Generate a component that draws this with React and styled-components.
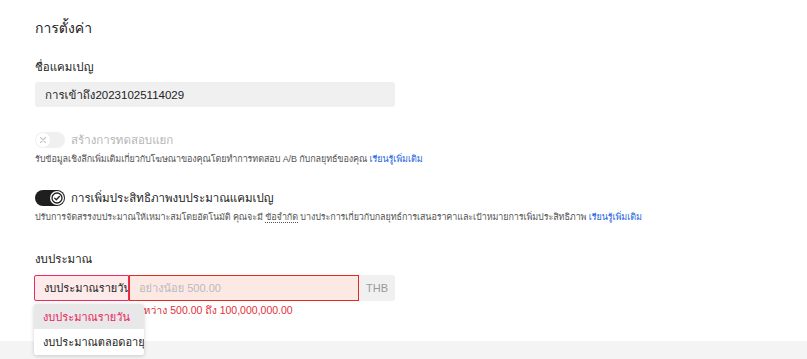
import React from "react";
import styled, { createGlobalStyle } from "styled-components";

const Global = createGlobalStyle`
  html, body { margin: 0; padding: 0; background: #fff; }
  body { font-family: "Liberation Sans", "Loma", "Noto Sans", sans-serif; color: #222; }
  * { box-sizing: border-box; }
`;

const Page = styled.div`
  width: 807px;
  height: 359px;
  overflow: hidden;
  display: flex;
  flex-direction: column;
`;

const Section = styled.div`
  padding: 17px 35px 0 35px;
  height: 341px;
  display: flex;
  flex-direction: column;
`;

const Title = styled.h2`
  margin: 0;
  font-size: 14px;
  font-weight: 400;
  line-height: 22px;
  color: #222;
`;

const Label = styled.div`
  font-size: 11.5px;
  line-height: 16px;
  color: #222;
  margin-top: ${(p) => p.$mt}px;
`;

const TextInput = styled.div`
  margin-top: 7px;
  width: 360px;
  height: 25px;
  background: #f0f0f0;
  border-radius: 3px;
  padding: 0 10px;
  display: flex;
  align-items: center;
  font-size: 11.5px;
  color: #222;
`;

const ToggleRow = styled.div`
  display: flex;
  align-items: center;
  gap: 6px;
  margin-top: ${(p) => p.$mt}px;
  height: 16px;
`;

const Track = styled.div`
  width: 30px;
  height: 16px;
  border-radius: 8px;
  background: ${(p) => (p.$on ? "#1f1f1f" : "#f0f0f0")};
  position: relative;
  flex-shrink: 0;
`;

const Knob = styled.div`
  position: absolute;
  top: 1px;
  left: ${(p) => (p.$on ? "15px" : "1px")};
  width: 14px;
  height: 14px;
  border-radius: 50%;
  background: #fff;
  display: flex;
  align-items: center;
  justify-content: center;
`;

const ToggleLabel = styled.span`
  font-size: 11.5px;
  color: ${(p) => (p.$disabled ? "#b5b5b5" : "#222")};
`;

const Desc = styled.div`
  margin-top: 4px;
  font-size: 9px;
  letter-spacing: -0.1px;
  line-height: 14px;
  color: #555;
  white-space: nowrap;
`;

const Link = styled.a`
  color: #1a5fe0;
  text-decoration: none;
  font-weight: 500;
`;

const Dotted = styled.span`
  border-bottom: 1px dotted #555;
`;

const BudgetRow = styled.div`
  margin-top: 8px;
  display: flex;
  height: 26px;
  width: 361px;
  margin-left: -1px;
`;

const SelectBox = styled.div`
  width: 95px;
  height: 26px;
  border: 1px solid #ef2a5a;
  border-radius: 2px 0 0 2px;
  background: #fdeaea;
  font-size: 11px;
  color: #222;
  display: flex;
  align-items: center;
  padding-left: 9px;
  white-space: nowrap;
  overflow: hidden;
`;

const AmountInput = styled.div`
  width: 230px;
  height: 26px;
  border: 1px solid #e52b20;
  background: #fde9e4;
  font-size: 11px;
  color: #b9b9b9;
  display: flex;
  align-items: center;
  padding-left: 9px;
`;

const Suffix = styled.div`
  width: 36px;
  height: 26px;
  background: #f0f0f0;
  border-radius: 0 3px 3px 0;
  font-size: 11px;
  color: #999;
  display: flex;
  align-items: center;
  justify-content: center;
`;

const ErrorWrap = styled.div`
  position: relative;
  width: 361px;
`;

const ErrorText = styled.div`
  margin-top: 2px;
  font-size: 10.5px;
  line-height: 14px;
  color: #e0303a;
  white-space: nowrap;
`;

const Menu = styled.div`
  position: absolute;
  top: 3px;
  left: -1px;
  width: 110px;
  background: #fff;
  border-radius: 3px;
  box-shadow: 0 1px 4px rgba(0, 0, 0, 0.18);
  overflow: hidden;
  z-index: 2;
`;

const MenuItem = styled.div`
  height: ${(p) => (p.$h ? p.$h : 25)}px;
  display: flex;
  align-items: center;
  padding-left: 9px;
  font-size: 11px;
  white-space: nowrap;
  background: ${(p) => (p.$active ? "#e8e8e8" : "#fff")};
  color: ${(p) => (p.$active ? "#e8245e" : "#222")};
`;

const Band = styled.div`
  height: 18px;
  background: #f4f4f4;
  flex-shrink: 0;
`;

const Check = () => (
  <svg width="12" height="12" viewBox="0 0 12 12" fill="none">
    <circle cx="6" cy="6" r="5" stroke="#1f1f1f" strokeWidth="1.3" />
    <path d="M3.6 6.1 L5.3 7.7 L8.4 4.5" stroke="#1f1f1f" strokeWidth="1.3" strokeLinecap="round" strokeLinejoin="round" />
  </svg>
);

const Cross = () => (
  <svg width="8" height="8" viewBox="0 0 8 8" fill="none">
    <path d="M1.5 1.5 L6.5 6.5 M6.5 1.5 L1.5 6.5" stroke="#c8c8c8" strokeWidth="1.2" strokeLinecap="round" />
  </svg>
);

export default function App() {
  return (
    <>
      <Global />
      <Page>
        <Section>
          <Title>การตั้งค่า</Title>
          <Label $mt={20}>ชื่อแคมเปญ</Label>
          <TextInput>การเข้าถึง20231025114029</TextInput>

          <ToggleRow $mt={25}>
            <Track>
              <Knob>
                <Cross />
              </Knob>
            </Track>
            <ToggleLabel $disabled>สร้างการทดสอบแยก</ToggleLabel>
          </ToggleRow>
          <Desc>
            รับข้อมูลเชิงลึกเพิ่มเติมเกี่ยวกับโฆษณาของคุณโดยทำการทดสอบ A/B กับกลยุทธ์ของคุณ{" "}
            <Link>เรียนรู้เพิ่มเติม</Link>
          </Desc>

          <ToggleRow $mt={24}>
            <Track $on>
              <Knob $on>
                <Check />
              </Knob>
            </Track>
            <ToggleLabel>การเพิ่มประสิทธิภาพงบประมาณแคมเปญ</ToggleLabel>
          </ToggleRow>
          <Desc>
            ปรับการจัดสรรงบประมาณให้เหมาะสมโดยอัตโนมัติ คุณจะมี <Dotted>ข้อจำกัด</Dotted>{" "}
            บางประการเกี่ยวกับกลยุทธ์การเสนอราคาและเป้าหมายการเพิ่มประสิทธิภาพ{" "}
            <Link>เรียนรู้เพิ่มเติม</Link>
          </Desc>

          <Label $mt={27}>งบประมาณ</Label>
          <BudgetRow>
            <SelectBox>งบประมาณรายวัน</SelectBox>
            <AmountInput>อย่างน้อย 500.00</AmountInput>
            <Suffix>THB</Suffix>
          </BudgetRow>
          <ErrorWrap>
            <ErrorText>โปรดป้อนงบประมาณระหว่าง 500.00 ถึง 100,000,000.00</ErrorText>
            <Menu>
              <MenuItem $active>งบประมาณรายวัน</MenuItem>
              <MenuItem $h={26}>งบประมาณตลอดอายุ</MenuItem>
            </Menu>
          </ErrorWrap>
        </Section>
        <Band />
      </Page>
    </>
  );
}
